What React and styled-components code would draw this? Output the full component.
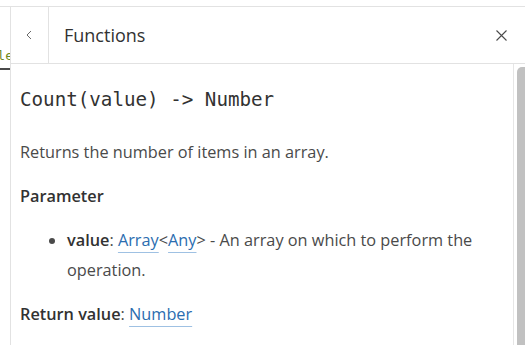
import React from "react";
import styled, { createGlobalStyle } from "styled-components";

const GlobalStyle = createGlobalStyle`
  html, body {
    margin: 0;
    padding: 0;
    background: #ffffff;
  }
  body {
    font-family: "Open Sans", "Lato", sans-serif;
  }
`;

const Page = styled.div`
  width: 525px;
  height: 345px;
  overflow: hidden;
  display: flex;
  flex-direction: column;
  background: #ffffff;
`;

const TopStrip = styled.div`
  height: 6px;
  flex: none;
  border-bottom: 1px solid #e2e2e2;
`;

const Main = styled.div`
  flex: 1;
  display: flex;
  min-height: 0;
`;

const Editor = styled.div`
  width: 10px;
  flex: none;
  border-right: 1px solid #e2e2e2;
  overflow: hidden;
  display: flex;
  flex-direction: column;
  align-items: flex-end;
`;

const EditorTab = styled.div`
  margin-top: 41px;
  font-family: "DejaVu Sans Mono", monospace;
  font-size: 13px;
  line-height: 16px;
  color: #6f8a1c;
  white-space: nowrap;
  padding-bottom: 4px;
  border-bottom: 2px solid #4a4a4a;
  margin-right: -3px;
`;

const Panel = styled.section`
  flex: 1;
  display: flex;
  flex-direction: column;
  min-width: 0;
`;

const Header = styled.header`
  height: 56px;
  flex: none;
  display: flex;
  align-items: stretch;
  border-bottom: 1px solid #e2e2e2;
`;

const BackButton = styled.button`
  width: 38px;
  flex: none;
  border: none;
  border-right: 1px solid #e2e2e2;
  background: transparent;
  display: flex;
  align-items: center;
  justify-content: center;
  padding: 0 1px 0 0;
  color: #6a6a6a;
`;

const Title = styled.h2`
  flex: 1;
  margin: 0;
  padding-left: 15px;
  display: flex;
  align-items: center;
  font-family: "Open Sans", sans-serif;
  font-weight: 400;
  font-size: 18px;
  color: #323232;
`;

const CloseButton = styled.button`
  width: 44px;
  flex: none;
  border: none;
  background: transparent;
  display: flex;
  align-items: center;
  justify-content: center;
  padding: 0 4px 0 0;
  color: #4a4a4a;
`;

const BodyRow = styled.div`
  flex: 1;
  display: flex;
  min-height: 0;
`;

const Content = styled.div`
  flex: 1;
  padding: 21px 20px 0 9px;
  color: #4a4a4a;
  font-family: "Open Sans", sans-serif;
  font-size: 16.3px;
  line-height: 30px;
`;

const Signature = styled.h3`
  margin: 0 0 22px;
  font-family: "DejaVu Sans Mono", monospace;
  font-weight: 400;
  font-size: 19.2px;
  line-height: 30px;
  color: #323232;
`;

const Para = styled.p`
  margin: 0 0 14px;
`;

const Label = styled.p`
  margin: 0 0 14px;
  font-weight: 600;
  color: #323232;
`;

const ParamList = styled.ul`
  margin: 0 0 14px;
  padding-left: 47px;
`;

const Strong = styled.strong`
  font-weight: 600;
  color: #323232;
`;

const Link = styled.a`
  color: #2b6db0;
  text-decoration: underline;
  text-decoration-color: #9fc1e3;
  text-decoration-thickness: 1px;
  text-underline-offset: 6px;
`;

const ScrollTrack = styled.div`
  width: 12px;
  flex: none;
  border-left: 1px solid #e6e6e6;
  padding: 3px 0 0 3px;
  box-sizing: border-box;
`;

const ScrollThumb = styled.div`
  height: 100%;
  background: #c1c1c1;
  border-radius: 5px 0 0 0;
  margin-right: -4px;
`;

export default function App() {
  return (
    <Page>
      <GlobalStyle />
      <TopStrip />
      <Main>
        <Editor>
          <EditorTab>Variable</EditorTab>
        </Editor>
        <Panel>
          <Header>
            <BackButton aria-label="Back">
              <svg width="8" height="10" viewBox="0 0 8 10" fill="none">
                <path d="M6 1 L2 5 L6 9" stroke="currentColor" strokeWidth="1" />
              </svg>
            </BackButton>
            <Title>Functions</Title>
            <CloseButton aria-label="Close">
              <svg width="11" height="11" viewBox="0 0 11 11" fill="none">
                <path d="M0.5 0.5 L10.5 10.5 M10.5 0.5 L0.5 10.5" stroke="currentColor" strokeWidth="1.1" />
              </svg>
            </CloseButton>
          </Header>
          <BodyRow>
            <Content>
              <Signature>Count(value) -&gt; Number</Signature>
              <Para>Returns the number of items in an array.</Para>
              <Label>Parameter</Label>
              <ParamList>
                <li>
                  <Strong>value</Strong>: <Link>Array</Link>&lt;<Link>Any</Link>&gt; - An array on which to perform the operation.
                </li>
              </ParamList>
              <Para>
                <Strong>Return value</Strong>: <Link>Number</Link>
              </Para>
            </Content>
            <ScrollTrack>
              <ScrollThumb />
            </ScrollTrack>
          </BodyRow>
        </Panel>
      </Main>
    </Page>
  );
}
